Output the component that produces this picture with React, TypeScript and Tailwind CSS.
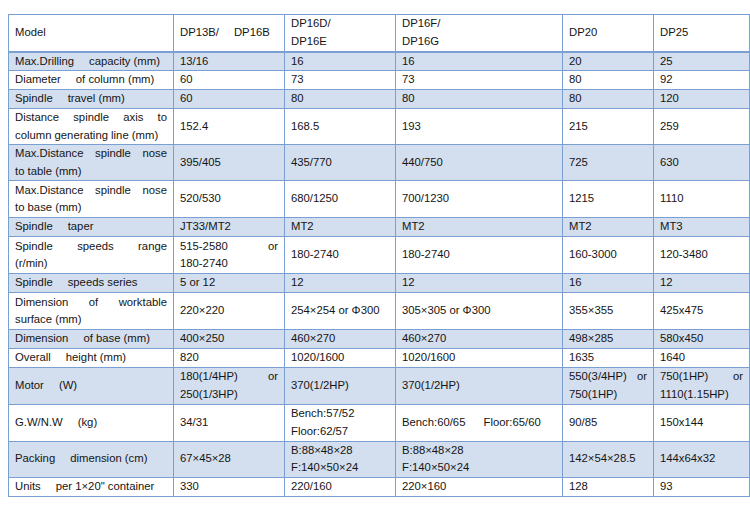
import React from "react";

// justified multi-line cell text: every line but the last is stretched to the cell width
const Lines = ({ lines }: { lines: React.ReactNode[] }) => (
  <>
    {lines.map((l, i) => (
      <div key={i} className={i < lines.length - 1 ? "[text-align-last:justify]" : ""}>
        {l}
      </div>
    ))}
  </>
);

const Gap = () => <span className="inline-block w-[15px]" />;

type Cell = React.ReactNode;
type Row = { h: string; shade: boolean; cells: Cell[] };

const two = (a: string, b: string) => <Lines lines={[a, b]} />;
const gap = (a: string, b: string) => (
  <span className="whitespace-nowrap">
    {a}
    <Gap />
    {b}
  </span>
);

const rows: Row[] = [
  { h: "h-[19px]", shade: true, cells: [gap("Max.Drilling", "capacity (mm)"), "13/16", "16", "16", "20", "25"] },
  { h: "h-[19px]", shade: false, cells: [gap("Diameter", "of column (mm)"), "60", "73", "73", "80", "92"] },
  { h: "h-[19px]", shade: true, cells: [gap("Spindle", "travel (mm)"), "60", "80", "80", "80", "120"] },
  {
    h: "h-[36px]",
    shade: false,
    cells: [two("Distance spindle axis to", "column generating line (mm)"), "152.4", "168.5", "193", "215", "259"],
  },
  {
    h: "h-[36px]",
    shade: true,
    cells: [two("Max.Distance spindle nose", "to table (mm)"), "395/405", "435/770", "440/750", "725", "630"],
  },
  {
    h: "h-[37px]",
    shade: false,
    cells: [two("Max.Distance spindle nose", "to base (mm)"), "520/530", "680/1250", "700/1230", "1215", "1110"],
  },
  { h: "h-[19px]", shade: true, cells: [gap("Spindle", "taper"), "JT33/MT2", "MT2", "MT2", "MT2", "MT3"] },
  {
    h: "h-[37px]",
    shade: false,
    cells: [
      two("Spindle speeds range", "(r/min)"),
      two("515-2580 or", "180-2740"),
      "180-2740",
      "180-2740",
      "160-3000",
      "120-3480",
    ],
  },
  { h: "h-[19px]", shade: true, cells: [gap("Spindle", "speeds series"), "5 or 12", "12", "12", "16", "12"] },
  {
    h: "h-[37px]",
    shade: false,
    cells: [
      two("Dimension of worktable", "surface (mm)"),
      "220×220",
      <span className="whitespace-nowrap">254×254 or Φ300</span>,
      "305×305 or Φ300",
      "355×355",
      "425x475",
    ],
  },
  { h: "h-[18px]", shade: true, cells: [gap("Dimension", "of base (mm)"), "400×250", "460×270", "460×270", "498×285", "580x450"] },
  { h: "h-[19px]", shade: false, cells: [gap("Overall", "height (mm)"), "820", "1020/1600", "1020/1600", "1635", "1640"] },
  {
    h: "h-[37px]",
    shade: true,
    cells: [
      gap("Motor", "(W)"),
      two("180(1/4HP) or", "250(1/3HP)"),
      "370(1/2HP)",
      "370(1/2HP)",
      two("550(3/4HP) or", "750(1HP)"),
      two("750(1HP) or", "1110(1.15HP)"),
    ],
  },
  {
    h: "h-[37px]",
    shade: false,
    cells: [
      gap("G.W/N.W", "(kg)"),
      "34/31",
      <Lines lines={["Bench:57/52", "Floor:62/57"]} />,
      gap("Bench:60/65", " Floor:65/60"),
      "90/85",
      "150x144",
    ],
  },
  {
    h: "h-[36px]",
    shade: true,
    cells: [
      gap("Packing", "dimension (cm)"),
      "67×45×28",
      <Lines lines={["B:88×48×28", "F:140×50×24"]} />,
      <Lines lines={["B:88×48×28", "F:140×50×24"]} />,
      "142×54×28.5",
      "144x64x32",
    ],
  },
  {
    h: "h-[19px]",
    shade: false,
    cells: [gap("Units", "per 1×20\" container"), "330", "220/160", "220×160", "128", "93"],
  },
];

const cellCls = "border border-[#7a9fd3] px-[6px] py-0 align-middle text-left";

export default function App() {
  return (
    <div className="w-[750px] h-[514px] bg-white pl-[8px] pt-[14px] font-['Liberation_Sans',Arial,sans-serif] text-[11.3px] leading-[17.5px] text-[#151515]">
      <table className="w-[741px] table-fixed border-collapse border border-[#7a9fd3]">
        <colgroup>
          <col className="w-[165px]" />
          <col className="w-[111px]" />
          <col className="w-[111px]" />
          <col className="w-[167px]" />
          <col className="w-[91px]" />
          <col className="w-[96px]" />
        </colgroup>
        <thead>
          <tr className="h-[37px]">
            <th className={`${cellCls} font-normal border-b-2`}>Model</th>
            <th className={`${cellCls} font-normal border-b-2`}>{gap("DP13B/", "DP16B")}</th>
            <th className={`${cellCls} font-normal border-b-2`}>
              <Lines lines={["DP16D/", "DP16E"]} />
            </th>
            <th className={`${cellCls} font-normal border-b-2`}>
              <Lines lines={["DP16F/", "DP16G"]} />
            </th>
            <th className={`${cellCls} font-normal border-b-2`}>DP20</th>
            <th className={`${cellCls} font-normal border-b-2`}>DP25</th>
          </tr>
        </thead>
        <tbody>
          {rows.map((r, i) => (
            <tr key={i} className={`${r.h} ${r.shade ? "bg-[#d3deee]" : "bg-white"}`}>
              {r.cells.map((c, j) => (
                <td key={j} className={cellCls}>
                  {c}
                </td>
              ))}
            </tr>
          ))}
        </tbody>
      </table>
    </div>
  );
}
